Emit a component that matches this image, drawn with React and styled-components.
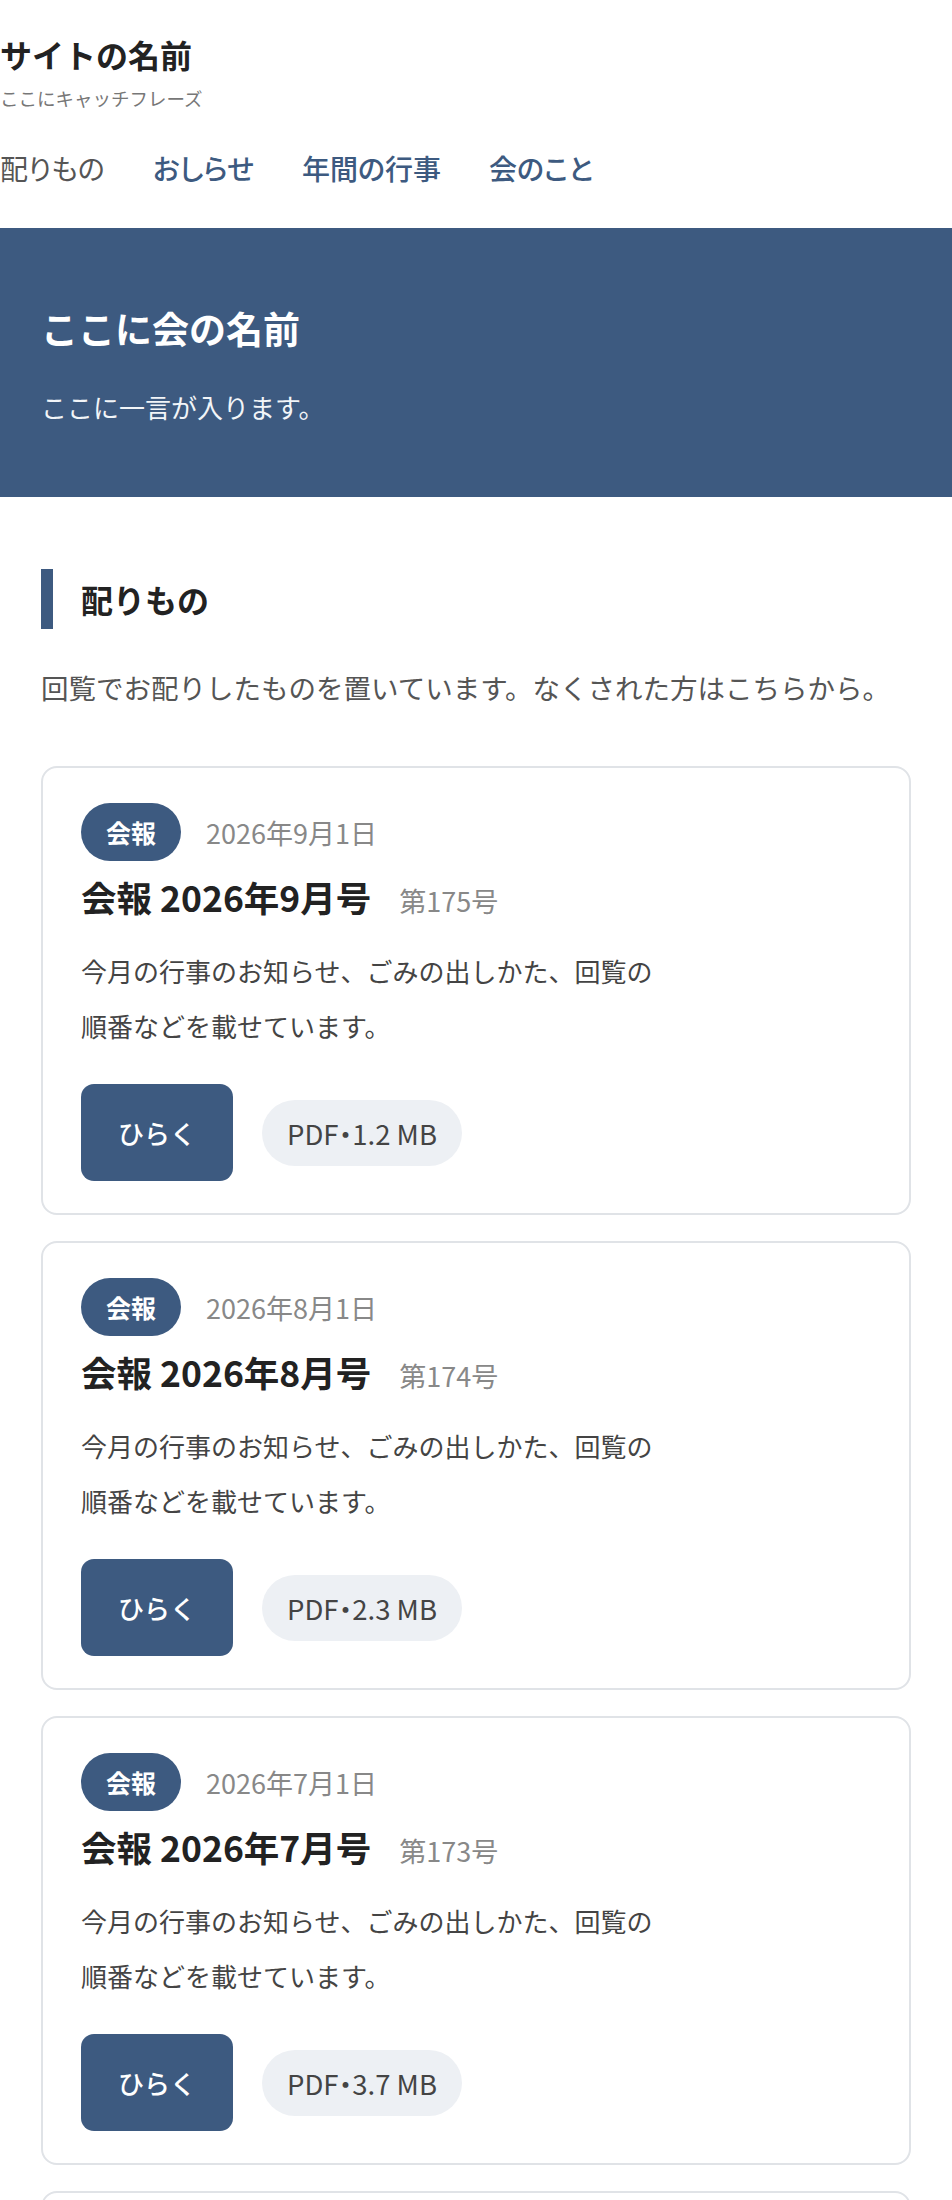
import React from 'react'
import styled, { createGlobalStyle } from 'styled-components'

const GlobalStyle = createGlobalStyle`
  body {
    margin: 0;
    background: #fff;
    color: #222;
    font-family: "Noto Sans CJK JP", "Noto Sans", sans-serif;
  }
  * {
    box-sizing: border-box;
  }
`

const StyledHeader = styled.header`
  padding-top: 32px;
`

const SiteTitle = styled.h1`
  margin: 0;
  font-size: 32px;
  font-weight: 700;
  line-height: 44px;
  color: #222;
`

const Tagline = styled.p`
  margin: 9px 0 0;
  font-size: 18.5px;
  line-height: 26px;
  color: #777;
`

const StyledNav = styled.nav`
  display: flex;
  gap: 48px;
  margin: 36px 0 39px;
  font-feature-settings: "palt";
`

const NavLink = styled.a`
  font-size: 28px;
  line-height: 42px;
  font-weight: ${(props) => (props.current ? 400 : 500)};
  color: ${(props) => (props.current ? '#555' : '#3d5a80')};
  text-decoration: none;
`

const Hero = styled.section`
  background: #3d5a80;
  color: #fff;
  padding: 72px 41px 70px;
`

const HeroTitle = styled.h2`
  margin: 0;
  font-size: 37px;
  font-weight: 700;
  line-height: 56px;
`

const HeroText = styled.p`
  margin: 31px 0 0;
  font-size: 26px;
  line-height: 40px;
  color: #f2f5f8;
`

const StyledMain = styled.main`
  padding: 72px 41px 40px;
`

const SectionHeading = styled.h2`
  margin: 0;
  padding-left: 28px;
  border-left: 12px solid #3d5a80;
  font-size: 32px;
  font-weight: 700;
  line-height: 60px;
  color: #222;
`

const Lead = styled.p`
  margin: 36px 0 57px;
  font-size: 27.5px;
  line-height: 44px;
  color: #555;
`

const CardList = styled.div`
  display: flex;
  flex-direction: column;
  gap: 26px;
`

const Card = styled.article`
  border: 2px solid #e0e3e7;
  border-radius: 16px;
  padding: 35px 38px 32px;
`

const Meta = styled.div`
  display: flex;
  align-items: center;
  gap: 25px;
`

const Badge = styled.span`
  display: inline-flex;
  align-items: center;
  justify-content: center;
  height: 58px;
  padding: 0 25px;
  border-radius: 29px;
  background: #3d5a80;
  color: #fff;
  font-size: 25px;
  font-weight: 700;
`

const DateText = styled.span`
  font-size: 27px;
  color: #888;
`

const TitleRow = styled.div`
  display: flex;
  align-items: baseline;
  gap: 28px;
  margin-top: 12px;
  line-height: 48px;
`

const CardTitle = styled.h3`
  margin: 0;
  font-size: 35.5px;
  font-weight: 700;
  color: #222;
`

const Issue = styled.span`
  font-size: 27px;
  color: #888;
`

const Description = styled.p`
  margin: 18px 0 0;
  max-width: 585px;
  font-size: 26px;
  line-height: 55px;
  color: #444;
`

const Actions = styled.div`
  display: flex;
  align-items: center;
  gap: 29px;
  margin-top: 31px;
`

const OpenButton = styled.a`
  display: inline-flex;
  align-items: center;
  justify-content: center;
  width: 152px;
  height: 97px;
  border-radius: 13px;
  background: #3d5a80;
  color: #fff;
  font-size: 26px;
  font-weight: 500;
  text-decoration: none;
`

const FileInfo = styled.span`
  display: inline-flex;
  align-items: center;
  height: 66px;
  padding: 0 25px;
  border-radius: 33px;
  background: #edf0f4;
  color: #444;
  font-size: 27.5px;
  font-feature-settings: "palt";
`

const issues = [
  { date: '2026年9月1日', title: '会報 2026年9月号', no: '第175号', size: '1.2 MB' },
  { date: '2026年8月1日', title: '会報 2026年8月号', no: '第174号', size: '2.3 MB' },
  { date: '2026年7月1日', title: '会報 2026年7月号', no: '第173号', size: '3.7 MB' },
  { date: '2026年6月1日', title: '会報 2026年6月号', no: '第172号', size: '1.8 MB' },
]

const IssueCard = ({ item }) => {
  return (
    <Card>
      <Meta>
        <Badge>会報</Badge>
        <DateText>{item.date}</DateText>
      </Meta>
      <TitleRow>
        <CardTitle>{item.title}</CardTitle>
        <Issue>{item.no}</Issue>
      </TitleRow>
      <Description>今月の行事のお知らせ、ごみの出しかた、回覧の順番などを載せています。</Description>
      <Actions>
        <OpenButton href="#">ひらく</OpenButton>
        <FileInfo>PDF・{item.size}</FileInfo>
      </Actions>
    </Card>
  )
}

const App = () => {
  return (
    <>
      <GlobalStyle />
      <StyledHeader>
        <SiteTitle>サイトの名前</SiteTitle>
        <Tagline>ここにキャッチフレーズ</Tagline>
        <StyledNav>
          <NavLink href="#" current>配りもの</NavLink>
          <NavLink href="#">おしらせ</NavLink>
          <NavLink href="#">年間の行事</NavLink>
          <NavLink href="#">会のこと</NavLink>
        </StyledNav>
      </StyledHeader>
      <Hero>
        <HeroTitle>ここに会の名前</HeroTitle>
        <HeroText>ここに一言が入ります。</HeroText>
      </Hero>
      <StyledMain>
        <SectionHeading>配りもの</SectionHeading>
        <Lead>回覧でお配りしたものを置いています。なくされた方はこちらから。</Lead>
        <CardList>
          {issues.map((item) => (
            <IssueCard key={item.no} item={item} />
          ))}
        </CardList>
      </StyledMain>
    </>
  )
}

export default App
